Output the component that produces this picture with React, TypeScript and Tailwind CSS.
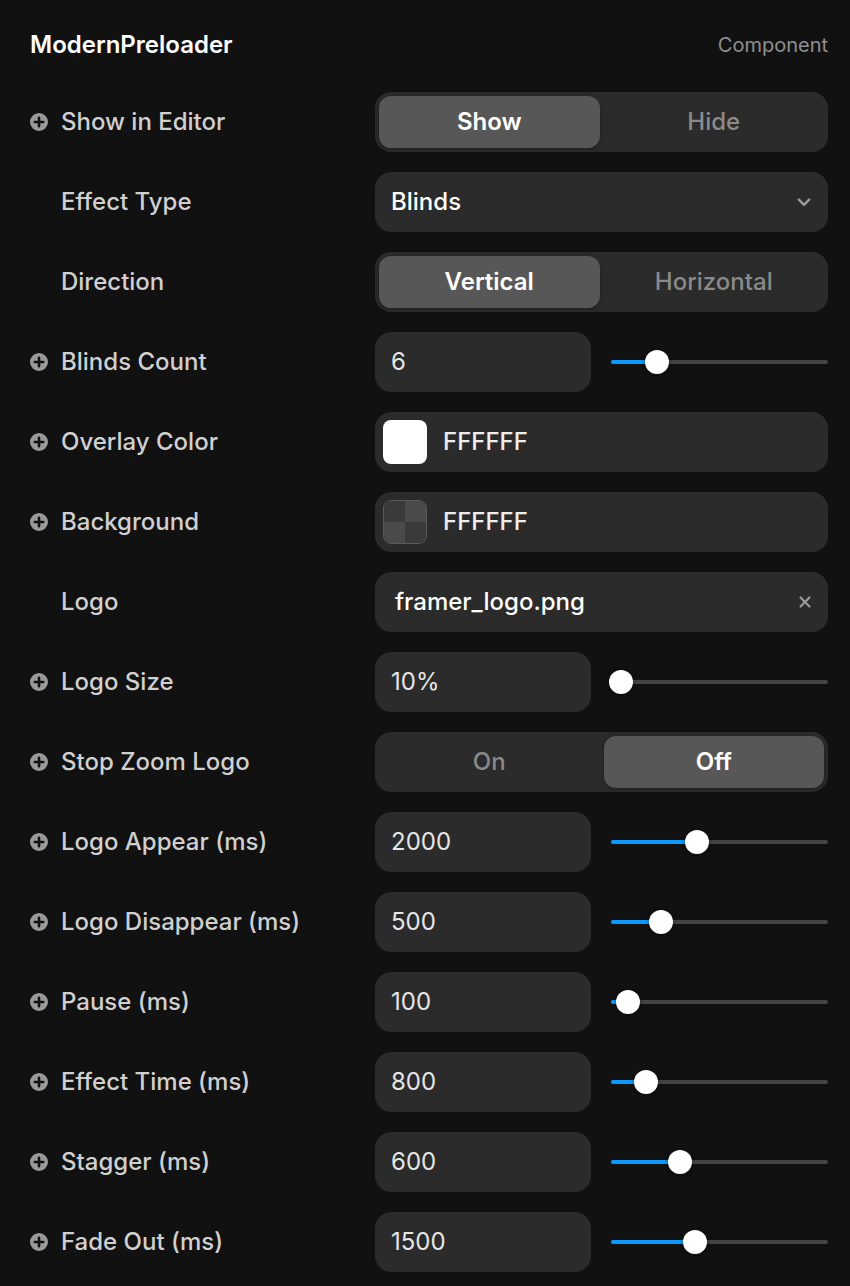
import React from "react";

type Row =
  | { kind: "segment"; label: string; plus: boolean; options: string[]; active: number }
  | { kind: "select"; label: string; plus: boolean; value: string }
  | { kind: "number"; label: string; plus: boolean; value: string; thumb: number }
  | { kind: "color"; label: string; plus: boolean; value: string; swatch: "white" | "checker" }
  | { kind: "file"; label: string; plus: boolean; value: string };

const rows: Row[] = [
  { kind: "segment", label: "Show in Editor", plus: true, options: ["Show", "Hide"], active: 0 },
  { kind: "select", label: "Effect Type", plus: false, value: "Blinds" },
  { kind: "segment", label: "Direction", plus: false, options: ["Vertical", "Horizontal"], active: 0 },
  { kind: "number", label: "Blinds Count", plus: true, value: "6", thumb: 657 },
  { kind: "color", label: "Overlay Color", plus: true, value: "FFFFFF", swatch: "white" },
  { kind: "color", label: "Background", plus: true, value: "FFFFFF", swatch: "checker" },
  { kind: "file", label: "Logo", plus: false, value: "framer_logo.png" },
  { kind: "number", label: "Logo Size", plus: true, value: "10%", thumb: 621 },
  { kind: "segment", label: "Stop Zoom Logo", plus: true, options: ["On", "Off"], active: 1 },
  { kind: "number", label: "Logo Appear (ms)", plus: true, value: "2000", thumb: 697 },
  { kind: "number", label: "Logo Disappear (ms)", plus: true, value: "500", thumb: 661 },
  { kind: "number", label: "Pause (ms)", plus: true, value: "100", thumb: 628 },
  { kind: "number", label: "Effect Time (ms)", plus: true, value: "800", thumb: 646 },
  { kind: "number", label: "Stagger (ms)", plus: true, value: "600", thumb: 680 },
  { kind: "number", label: "Fade Out (ms)", plus: true, value: "1500", thumb: 695 },
];

function PlusIcon() {
  return (
    <svg width="18" height="18" viewBox="0 0 18 18" className="shrink-0">
      <circle cx="9" cy="9" r="9" fill="#9a9a9a" />
      <path d="M9 4.8v8.4M4.8 9h8.4" stroke="#111111" strokeWidth="2.6" strokeLinecap="round" />
    </svg>
  );
}

function Slider({ thumb }: { thumb: number }) {
  // thumb = x of the thumb centre in page coords; track starts at 611
  const pos = thumb - 611;
  return (
    <div className="relative flex-1 h-[60px] flex items-center">
      <div className="w-full h-1 rounded-full bg-[#444444]" />
      <div className="absolute left-0 h-1 rounded-full bg-[#0b99ff]" style={{ width: pos }} />
      <div
        className="absolute w-6 h-6 rounded-full bg-white shadow-[0_1px_4px_rgba(0,0,0,0.5)]"
        style={{ left: pos - 12 }}
      />
    </div>
  );
}

function Control({ row }: { row: Row }) {
  if (row.kind === "segment") {
    return (
      <div className="flex h-[60px] gap-1 rounded-2xl bg-[#2b2b2b] p-1">
        {row.options.map((o, i) => (
          <div
            key={o}
            className={`flex-1 flex items-center justify-center rounded-xl text-[24px] ${
              i === row.active
                ? "bg-[#575757] text-white font-semibold shadow-[0_1px_4px_rgba(0,0,0,0.3)]"
                : "text-[#8a8a8a] font-medium"
            }`}
          >
            {o}
          </div>
        ))}
      </div>
    );
  }
  if (row.kind === "select") {
    return (
      <div className="flex h-[60px] items-center justify-between rounded-2xl bg-[#2b2b2b] pl-4 pr-4">
        <span className="text-[24px] font-medium text-white">{row.value}</span>
        <svg width="16" height="16" viewBox="0 0 14 14">
          <path d="M2.5 5l4.5 4.5L11.5 5" stroke="#9a9a9a" strokeWidth="2.2" fill="none" strokeLinecap="round" strokeLinejoin="round" />
        </svg>
      </div>
    );
  }
  if (row.kind === "number") {
    return (
      <div className="flex items-center gap-5">
        <div className="w-[216px] h-[60px] flex items-center rounded-2xl bg-[#2b2b2b] px-4 text-[24px] text-[#e6e6e6]">
          {row.value}
        </div>
        <Slider thumb={row.thumb} />
      </div>
    );
  }
  if (row.kind === "color") {
    return (
      <div className="flex h-[60px] items-center gap-4 rounded-2xl bg-[#2b2b2b] px-2">
        {row.swatch === "white" ? (
          <div className="w-11 h-11 rounded-lg bg-white" />
        ) : (
          <div className="w-11 h-11 rounded-lg overflow-hidden grid grid-cols-2 grid-rows-2 border border-[#5a5a5a]">
            <div className="bg-[#3a3a3a]" />
            <div className="bg-[#4a4a4a]" />
            <div className="bg-[#4a4a4a]" />
            <div className="bg-[#3a3a3a]" />
          </div>
        )}
        <span className="text-[24px] font-medium text-[#eeeeee]">{row.value}</span>
      </div>
    );
  }
  return (
    <div className="flex h-[60px] items-center justify-between rounded-2xl bg-[#2b2b2b] pl-5 pr-4">
      <span className="text-[24px] font-medium text-white">{row.value}</span>
      <svg width="14" height="14" viewBox="0 0 14 14">
        <path d="M2.5 2.5l9 9M11.5 2.5l-9 9" stroke="#9a9a9a" strokeWidth="2.2" strokeLinecap="round" />
      </svg>
    </div>
  );
}

export default function App() {
  return (
    <div className="min-h-[1286px] w-[850px] bg-[#111111] pl-[30px] pr-[22px] pt-[30px] font-['Inter','Noto_Sans',sans-serif]">
      <div className="flex items-center justify-between h-[30px]">
        <span className="text-[24px] font-semibold text-white">ModernPreloader</span>
        <span className="text-[20px] text-[#8f8f8f]">Component</span>
      </div>
      <div className="mt-[32px] flex flex-col gap-5">
        {rows.map((row) => (
          <div key={row.label} className="flex items-center">
            <div className="flex-1 flex items-center gap-[13px]">
              {row.plus ? <PlusIcon /> : <div className="w-[18px] shrink-0" />}
              <span className="text-[24px] font-medium text-[#d0d0d0]">{row.label}</span>
            </div>
            <div className="w-[453px]">
              <Control row={row} />
            </div>
          </div>
        ))}
      </div>
    </div>
  );
}
